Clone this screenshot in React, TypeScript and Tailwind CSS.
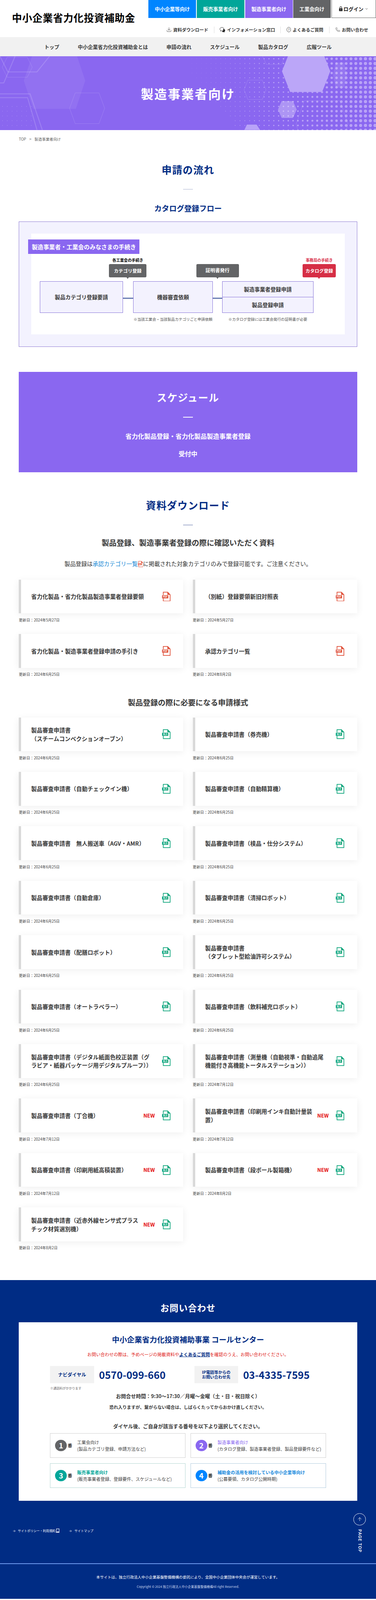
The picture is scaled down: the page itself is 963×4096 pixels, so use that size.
import { ArrowRight, ArrowUp, ChevronDown, Download, Phone } from "lucide-react";

const hexPoints = (cx: number, cy: number, rx: number, ry: number, inset: number) =>
  [
    [cx - rx, cy],
    [cx - rx + inset, cy - ry],
    [cx + rx - inset, cy - ry],
    [cx + rx, cy],
    [cx + rx - inset, cy + ry],
    [cx - rx + inset, cy + ry],
  ]
    .map((p) => p.join(","))
    .join(" ");

function HeroArt() {
  const dots: { x: number; y: number; r: number }[] = [];
  for (let row = 0; row < 16; row++) {
    const y = 8 + row * 15.2;
    const start = 612 + Math.max(0, y - 60) * 0.85;
    for (let col = 0; col < 40; col++) {
      const x = 612 + col * 15.4;
      if (x < start || x > 1200) continue;
      const t = (x - 612) / 588;
      dots.push({ x, y, r: 0.5 + 5 * Math.pow(t, 1.5) });
    }
  }
  for (let row = 0; row < 5; row++) {
    for (let col = 0; col < 7; col++) {
      dots.push({ x: 8 + col * 15.3, y: 160 + row * 15.2, r: 0.8 });
    }
  }
  return (
    <svg viewBox="0 0 1200 235" className="absolute inset-0 h-full w-full" aria-hidden="true">
      <g fill="#fff" fillOpacity="0.4">
        {dots.map((d, i) => (
          <circle key={i} cx={d.x} cy={d.y} r={d.r} />
        ))}
      </g>
      <polygon points={hexPoints(174, 78, 98, 90, 30)} fill="#fff" fillOpacity="0.07" />
      <polygon points={hexPoints(977, 48, 77, 66, 26)} fill="#bba6f8" />
      <polygon points={hexPoints(917, 170, 30, 27, 12)} fill="#fff" fillOpacity="0.3" />
      <polygon points="780,235 788,218 819,218 830,235" fill="#b9a3f8" />
      <polygon points={hexPoints(1085, 60, 22, 40, 8)} fill="#fff" fillOpacity="0.1" />
      <g fill="none" stroke="#fff" strokeOpacity="0.18" strokeWidth="1.2">
        <polygon points={hexPoints(814, 107, 35, 31, 12)} />
        <polygon points={hexPoints(1028, 217, 83, 75, 26)} />
        <polygon points={hexPoints(874, 0, 36, 26, 12)} />
        <polygon points={hexPoints(278, 166, 56, 49, 18)} />
        <polygon points={hexPoints(55, 35, 48, 32, 16)} />
      </g>
      <g fill="none" stroke="#fff" strokeOpacity="0.16" strokeWidth="3">
        <polyline points="0,120 96,120 135,235" />
        <polyline points="0,132 88,132 118,235" />
        <polyline points="158,0 118,50 25,50 0,0" />
        <polyline points="0,85 12,85 48,0" />
      </g>
    </svg>
  );
}

function FileIcon({ kind, small }: { kind: "PDF" | "XLS"; small?: boolean }) {
  const color = kind === "PDF" ? "#df4f38" : "#0fa57c";
  return (
    <svg viewBox="0 0 27 31" className={small ? "inline-block h-[20px] w-[17px] align-[-4px]" : "h-[31px] w-[27px] shrink-0"} aria-hidden="true">
      <path d="M4 10V1.2h14l7.8 8V29.8H4V21" fill="none" stroke={color} strokeWidth="2.2" />
      <path d="M17 1.2v8.6h8.8z" fill={color} />
      <rect x="0" y="11" width="20" height="10" rx="1" fill={color} />
      <text x="10" y="19" fontSize="7.5" fontWeight="700" textAnchor="middle" fill="#fff">
        {kind}
      </text>
    </svg>
  );
}

function Heading({ children, light }: { children: string; light?: boolean }) {
  return (
    <div className="flex flex-col items-center">
      <h2 className={light ? "text-[32px] leading-[48px] font-bold tracking-[0.05em] text-white" : "text-[32px] leading-[48px] font-bold tracking-[0.05em] text-[#002c84]"}>
        {children}
      </h2>
      <div className={light ? "mt-[38px] h-[2px] w-[32px] bg-white" : "mt-[38px] h-[2px] w-[32px] bg-[#a6b0cf]"} />
    </div>
  );
}

type Doc = { title: string; date: string; kind: "PDF" | "XLS"; isNew?: boolean };

function DocCard({ title, date, kind, isNew }: Doc) {
  return (
    <div>
      <div className="flex h-[108px] items-center border-l-[8px] border-[#d9d9d9] bg-white pr-[41px] pl-[32px] shadow-[0_4px_22px_rgba(0,0,0,0.07)]">
        <p className="flex-1 text-[18px] leading-[27px] font-bold whitespace-pre-line text-[#3a3a3a]">{title}</p>
        {isNew && <span className="ml-[16px] text-[16px] font-bold text-[#e30a0a]">NEW</span>}
        <span className={isNew ? "ml-[23px]" : "ml-[30px]"}>
          <FileIcon kind={kind} />
        </span>
      </div>
      <p className="mt-[12px] text-[12px] leading-[18px] text-[#444]">更新日：{date}</p>
    </div>
  );
}

const P = "製品審査申請書";
const guideDocs: Doc[] = [
  { title: "省力化製品・省力化製品製造事業者登録要領", date: "2024年5月27日", kind: "PDF" },
  { title: "（別紙）登録要領新旧対照表", date: "2024年5月27日", kind: "PDF" },
  { title: "省力化製品・製造事業者登録申請の手引き", date: "2024年6月25日", kind: "PDF" },
  { title: "承認カテゴリ一覧", date: "2024年8月2日", kind: "PDF" },
];
const formDocs: Doc[] = [
  { title: P + "\n（スチームコンベクションオーブン）", date: "2024年6月25日", kind: "XLS" },
  { title: P + "（券売機）", date: "2024年6月25日", kind: "XLS" },
  { title: P + "（自動チェックイン機）", date: "2024年6月25日", kind: "XLS" },
  { title: P + "（自動精算機）", date: "2024年6月25日", kind: "XLS" },
  { title: P + "　無人搬送車（AGV・AMR）", date: "2024年6月25日", kind: "XLS" },
  { title: P + "（検品・仕分システム）", date: "2024年6月25日", kind: "XLS" },
  { title: P + "（自動倉庫）", date: "2024年6月25日", kind: "XLS" },
  { title: P + "（清掃ロボット）", date: "2024年6月25日", kind: "XLS" },
  { title: P + "（配膳ロボット）", date: "2024年6月25日", kind: "XLS" },
  { title: P + "\n（タブレット型給油許可システム）", date: "2024年6月25日", kind: "XLS" },
  { title: P + "（オートラベラー）", date: "2024年6月25日", kind: "XLS" },
  { title: P + "（飲料補充ロボット）", date: "2024年6月25日", kind: "XLS" },
  { title: P + "（デジタル紙面色校正装置（グラビア・紙器パッケージ用デジタルプルーフ））", date: "2024年6月25日", kind: "XLS" },
  { title: P + "（測量機（自動視準・自動追尾機能付き高機能トータルステーション））", date: "2024年7月12日", kind: "XLS" },
  { title: P + "（丁合機）", date: "2024年7月12日", kind: "XLS", isNew: true },
  { title: P + "（印刷用インキ自動計量装置）", date: "2024年7月12日", kind: "XLS", isNew: true },
  { title: P + "（印刷用紙高積装置）", date: "2024年7月12日", kind: "XLS", isNew: true },
  { title: P + "（段ボール製箱機）", date: "2024年8月2日", kind: "XLS", isNew: true },
  { title: P + "（近赤外線センサ式プラスチック材質選別機）", date: "2024年8月2日", kind: "XLS", isNew: true },
];

function Bubble({ className, arrow, children }: { className: string; arrow: string; children: string }) {
  return (
    <div className={className}>
      {children}
      <span className={arrow} />
    </div>
  );
}

function FlowDiagram() {
  const box = "absolute flex items-center justify-center border-2 border-[#8470d8] bg-[#f3f2fe] text-[17px] font-bold text-[#3a3a3a]";
  return (
    <div className="relative mx-[38px] h-[321px] bg-white">
      <div className="absolute top-[19px] -left-[9px] flex h-[46px] w-[355px] items-center justify-center bg-[#8a67f0] text-[18.5px] font-bold text-white">
        製造事業者・工業会のみなさまの手続き
      </div>
      <p className="absolute top-[76px] left-[249px] w-[119px] text-center text-[12.3px] leading-[18px] font-bold text-black">各工業会の手続き</p>
      <p className="absolute top-[76px] left-[867px] w-[105px] text-center text-[12.3px] leading-[18px] font-bold text-[#d8304a]">事務局の手続き</p>
      <Bubble
        className="absolute top-[97px] left-[249px] flex h-[42px] w-[119px] items-center justify-center rounded-[4px] bg-[#636466] text-[14.7px] font-bold text-white"
        arrow="absolute top-full left-[55px] border-x-[4px] border-t-[5px] border-x-transparent border-t-[#636466]"
      >
        カテゴリ登録
      </Bubble>
      <Bubble
        className="absolute top-[97px] left-[527px] flex h-[42px] w-[136px] items-center justify-center rounded-[4px] bg-[#636466] text-[15.4px] font-bold text-white"
        arrow="absolute top-full left-[64px] border-x-[4px] border-t-[5px] border-x-transparent border-t-[#636466]"
      >
        証明書発行
      </Bubble>
      <Bubble
        className="absolute top-[97px] left-[867px] flex h-[42px] w-[105px] items-center justify-center rounded-[4px] bg-[#d62e45] text-[14.7px] font-bold text-white"
        arrow="absolute top-full left-[48px] border-x-[4px] border-t-[5px] border-x-transparent border-t-[#d62e45]"
      >
        カタログ登録
      </Bubble>
      <div className={box + " top-[152px] left-[28px] h-[101px] w-[265px]"}>製品カテゴリ登録要請</div>
      <div className="absolute top-[204px] left-[293px] h-[4px] w-[33px] bg-[#6478b0]" />
      <div className={box + " top-[152px] left-[326px] h-[101px] w-[254px]"}>機器審査依頼</div>
      <div className="absolute top-[204px] left-[580px] h-[4px] w-[30px] bg-[#6478b0]" />
      <div className={box + " top-[152px] left-[610px] h-[51px] w-[291px]"}>製造事業者登録申請</div>
      <div className={box + " top-[202px] left-[610px] h-[51px] w-[291px]"}>製品登録申請</div>
      <p className="absolute top-[264px] left-[326px] w-[254px] text-center text-[12px] leading-[18px] whitespace-nowrap text-[#555]">※当該工業会・当該製品カテゴリごと申請依頼</p>
      <p className="absolute top-[264px] left-[628px] w-[255px] text-center text-[12px] leading-[18px] whitespace-nowrap text-[#555]">※カタログ登録には工業会発行の証明書が必要</p>
    </div>
  );
}

const dialOptions = [
  { n: "1", title: "工業会向け", sub: "(製品カテゴリ登録、申請方法など)", box: "border-[#cfcfcf]", circle: "bg-[#636466]", text: "text-[#444]" },
  { n: "2", title: "製造事業者向け", sub: "(カタログ登録、製造事業者登録、製品登録要件など)", box: "border-[#cfcfcf]", circle: "bg-[#8a67f0]", text: "text-[#8a67f0]" },
  { n: "3", title: "販売事業者向け", sub: "(販売事業者登録、登録要件、スケジュールなど)", box: "border-[#b3d6d2]", circle: "bg-[#00a699]", text: "font-bold text-[#00a699]" },
  { n: "4", title: "補助金の活用を検討している中小企業等向け", sub: "(公募要領、カタログ公開時期)", box: "border-[#b1cbdd]", circle: "bg-[#0085ff]", text: "font-bold text-[#1587dc]" },
];

export default function App() {
  return (
    <div className="w-[1200px] bg-white font-['Noto_Sans_CJK_JP','Noto_Sans',sans-serif] text-[#333] [zoom:0.8025]">
      <header className="flex h-[118px] items-start justify-between">
        <div className="pt-[33px] pl-[38px] text-[32px] leading-[48px] font-bold tracking-[0.8px] text-black">中小企業省力化投資補助金</div>
        <div className="flex flex-col items-end">
          <div className="flex h-[57px] gap-[2px] text-[16px] font-bold text-white">
            <a className="flex w-[152px] items-center justify-center bg-[#0085ff]">中小企業等向け</a>
            <a className="flex w-[152px] items-center justify-center bg-[#00a699]">販売事業者向け</a>
            <a className="flex w-[152px] items-center justify-center bg-[#8a67f0]">製造事業者向け</a>
            <a className="flex w-[119px] items-center justify-center bg-[#636466]">工業会向け</a>
            <a className="ml-[1px] flex w-[142px] items-center justify-center gap-[2px] border-x border-b-2 border-[#666] bg-white text-[#222]">
              <svg viewBox="0 0 12 16" className="h-[16px] w-[12px]" aria-hidden="true">
                <path d="M3 7V4.500a3 3 0 0 1 6 0V7" fill="none" stroke="#222" strokeWidth="1.500" />
                <rect x="0.500" y="6.500" width="11" height="9" rx="1" fill="#222" />
                <rect x="5.300" y="9.500" width="1.400" height="3" fill="#fff" />
              </svg>
              ログイン
              <ChevronDown size={12} strokeWidth={2} className="ml-[2px]" />
            </a>
          </div>
          <div className="mt-[28px] flex h-[20px] items-center pr-[25px] text-[14px] font-bold text-[#3a3a3a]">
            <a className="flex items-center gap-[5px] border-r border-[#ddd] pr-[18px]">
              <Download size={17} strokeWidth={1.5} />
              資料ダウンロード
            </a>
            <a className="flex items-center gap-[4px] border-r border-[#ddd] px-[17px]">
              <svg viewBox="0 0 22 20" className="h-[18px] w-[20px]" aria-hidden="true">
                <path d="M9 1.500c4 0 7 2.600 7 6s-3 6-7 6c-1 0-1.500 0-2-.2L3.500 15l.7-3.200C2.500 10.600 1.500 9.200 1.500 7.500c0-3.400 3.500-6 7.500-6z" fill="none" stroke="#222" strokeWidth="1.300" />
                <path d="M13 7c4 0 7 2.500 7 5.500 0 1.800-.9 3-2.200 4l.7 3-3.500-1.500c-.6.100-1.300.200-2 .200-2.500 0-4-1.500-4-3 3.500 0 5.500-2.500 4-8.200z" fill="#222" />
              </svg>
              インフォメーション窓口
            </a>
            <a className="flex items-center gap-[6px] border-r border-[#ddd] px-[18px]">
              <svg viewBox="0 0 14 17" className="h-[17px] w-[14px]" aria-hidden="true">
                <ellipse cx="7" cy="8.500" rx="6.200" ry="7.700" fill="none" stroke="#222" strokeWidth="1" />
                <text x="7" y="12" fontSize="10" fontWeight="400" textAnchor="middle" fill="#222">?</text>
              </svg>
              よくあるご質問
            </a>
            <a className="flex items-center gap-[6px] pl-[19px]">
              <Phone size={15} strokeWidth={1.4} />
              お問い合わせ
            </a>
          </div>
        </div>
      </header>

      <nav className="flex h-[62px] items-center justify-center gap-[59px] bg-[#f1f1f1] text-[16px] font-bold text-[#3a3a3a]">
        <a>トップ</a>
        <a>中小企業省力化投資補助金とは</a>
        <a>申請の流れ</a>
        <a>スケジュール</a>
        <a>製品カタログ</a>
        <a>広報ツール</a>
      </nav>

      <section className="relative flex h-[235px] items-center justify-center overflow-hidden bg-[#8a67f0]">
        <HeroArt />
        <h1 className="relative text-[40px] font-bold tracking-[3px] text-white">製造事業者向け</h1>
      </section>

      <div className="flex items-center gap-[10px] px-[60px] pt-[20px] text-[12px] leading-[18px] text-[#666]">
        <span>TOP</span>
        <span>&gt;</span>
        <span>製造事業者向け</span>
      </div>

      <main className="px-[60px]">
        <section className="pt-[64px]">
          <Heading>申請の流れ</Heading>
          <h3 className="mt-[42px] text-center text-[24px] leading-[36px] font-bold text-[#002c84]">カタログ登録フロー</h3>
          <div className="mt-[23px] h-[401px] border-2 border-[#8d79d2] bg-[#f3f2fe] pt-[38px]">
            <FlowDiagram />
          </div>
        </section>

        <section className="mt-[80px] flex h-[320px] flex-col items-center bg-[#8a67f0] pt-[57px] text-white">
          <Heading light>スケジュール</Heading>
          <p className="mt-[44px] text-[20px] leading-[30px] font-bold">省力化製品登録・省力化製品製造事業者登録</p>
          <p className="mt-[26px] text-[20px] leading-[30px] font-bold">受付中</p>
        </section>

        <section className="pt-[81px]">
          <Heading>資料ダウンロード</Heading>
          <h3 className="mt-[38px] text-center text-[24px] leading-[36px] font-bold text-[#3a3a3a]">製品登録、製造事業者登録の際に確認いただく資料</h3>
          <p className="mt-[34px] text-center text-[18px] leading-[27px] text-[#333]">
            製品登録は<a className="text-[#1b8ad6]">承認カテゴリ一覧</a>
            <FileIcon kind="PDF" small />
            に掲載された対象カテゴリのみで登録可能です。ご注意ください。
          </p>
          <div className="mt-[38px] grid grid-cols-2 gap-x-[30px] gap-y-[35.750px]">
            {guideDocs.map((d) => (
              <DocCard key={d.title} {...d} />
            ))}
          </div>
          <h3 className="mt-[62px] text-center text-[24px] leading-[36px] font-bold text-[#3a3a3a]">製品登録の際に必要になる申請様式</h3>
          <div className="mt-[30px] grid grid-cols-2 gap-x-[30px] gap-y-[35.750px]">
            {formDocs.map((d) => (
              <DocCard key={d.title} {...d} />
            ))}
          </div>
        </section>
      </main>

      <footer className="relative mt-[93px] bg-[#002c84]">
        <section className="px-[60px] pt-[68px]">
          <h2 className="text-center text-[28px] leading-[42px] font-bold tracking-[0.05em] text-white">お問い合わせ</h2>
          <div className="mt-[25px] h-[570px] bg-white px-[100px] pt-[37px]">
            <h3 className="text-center text-[24px] leading-[36px] font-bold text-[#002c84]">中小企業省力化投資補助事業 コールセンター</h3>
            <p className="mt-[20px] text-center text-[14px] leading-[21px] text-[#e0251b]">
              お問い合わせの際は、予めページの掲載資料や<a className="font-bold text-[#002c84] underline">よくあるご質問</a>を確認のうえ、お問い合わせください。
            </p>
            <div className="mt-[26px] flex">
              <div className="flex w-[460px] items-center gap-[16px]">
                <span className="flex h-[54px] w-[140px] items-center justify-center bg-[#f2f2f2] text-[15px] font-bold text-[#002c84]">ナビダイヤル</span>
                <span className="text-[32px] font-bold text-[#002c84]">0570-099-660</span>
              </div>
              <div className="flex items-center gap-[16px]">
                <span className="flex h-[54px] w-[140px] items-center justify-center bg-[#f2f2f2] text-center text-[13px] leading-[15px] font-bold text-[#002c84]">
                  IP電話等からの
                  <br />
                  お問い合わせ先
                </span>
                <span className="text-[32px] font-bold text-[#002c84]">03-4335-7595</span>
              </div>
            </div>
            <p className="mt-[9px] text-[10px] leading-[15px] text-[#666]">※通話料がかかります</p>
            <p className="mt-[5px] text-center text-[16px] leading-[24px] font-bold text-[#3a3a3a]">お問合せ時間：9:30～17:30／月曜～金曜（土・日・祝日除く）</p>
            <p className="mt-[14px] text-center text-[14px] leading-[21px] font-bold text-[#3a3a3a]">恐れ入りますが、繋がらない場合は、しばらくたってからおかけ直しください。</p>
            <p className="mt-[37px] text-center text-[16px] leading-[24px] font-bold text-[#3a3a3a]">ダイヤル後、ご自身が該当する番号を以下より選択してください。</p>
            <div className="mt-[11px] grid w-[880px] grid-cols-2 gap-x-[16px] gap-y-[17px]">
              {dialOptions.map((o) => (
                <div key={o.n} className={"flex h-[79px] items-center border-2 bg-white pl-[15px] " + o.box}>
                  <span className={"flex h-[37px] w-[37px] shrink-0 items-center justify-center rounded-full text-[24px] font-bold text-white " + o.circle}>{o.n}</span>
                  <span className="ml-[3px] text-[14px] font-bold text-[#333]">番</span>
                  <div className="ml-[16px] text-[14px] leading-[21px]">
                    <p className={o.text}>{o.title}</p>
                    <p className="text-[#444]">{o.sub}</p>
                  </div>
                </div>
              ))}
            </div>
          </div>
        </section>

        <div className="mt-[86px] flex h-[20px] items-center px-[40px] text-[10px] text-white">
          <ArrowRight size={11} />
          <span className="ml-[6px]">サイトポリシー・利用規約</span>
          <svg viewBox="0 0 14 16" className="h-[15px] w-[14px]" aria-hidden="true">
            <rect x="3" y="1" width="9" height="10" fill="none" stroke="#fff" strokeWidth="1.500" />
            <rect x="1" y="12" width="12" height="2" fill="#fff" />
          </svg>
          <ArrowRight size={11} className="ml-[29px]" />
          <span className="ml-[7px]">サイトマップ</span>
        </div>

        <div className="mt-[93px] h-[2px] bg-[#6f9bf0]" />
        <p className="mt-[33px] text-center text-[12px] leading-[18px] text-white">本サイトは、独立行政法人中小企業基盤整備機構の委託により、全国中小企業団体中央会が運営しています。</p>
        <p className="mt-[14px] pb-[32px] text-center text-[10px] leading-[15px] text-[#c8d4ee]">Copyright © 2024 独立行政法人中小企業基盤整備機構All right Reserved.</p>

        <a className="absolute top-[744px] right-[33px] flex flex-col items-center text-white">
          <span className="flex h-[39px] w-[39px] items-center justify-center rounded-full border border-white">
            <ArrowUp size={18} strokeWidth={1.5} />
          </span>
          <span className="mt-[13px] font-['Inter',sans-serif] text-[13px] leading-[14px] font-semibold tracking-[0.1em] [writing-mode:vertical-rl]">PAGE TOP</span>
        </a>
      </footer>
    </div>
  );
}
